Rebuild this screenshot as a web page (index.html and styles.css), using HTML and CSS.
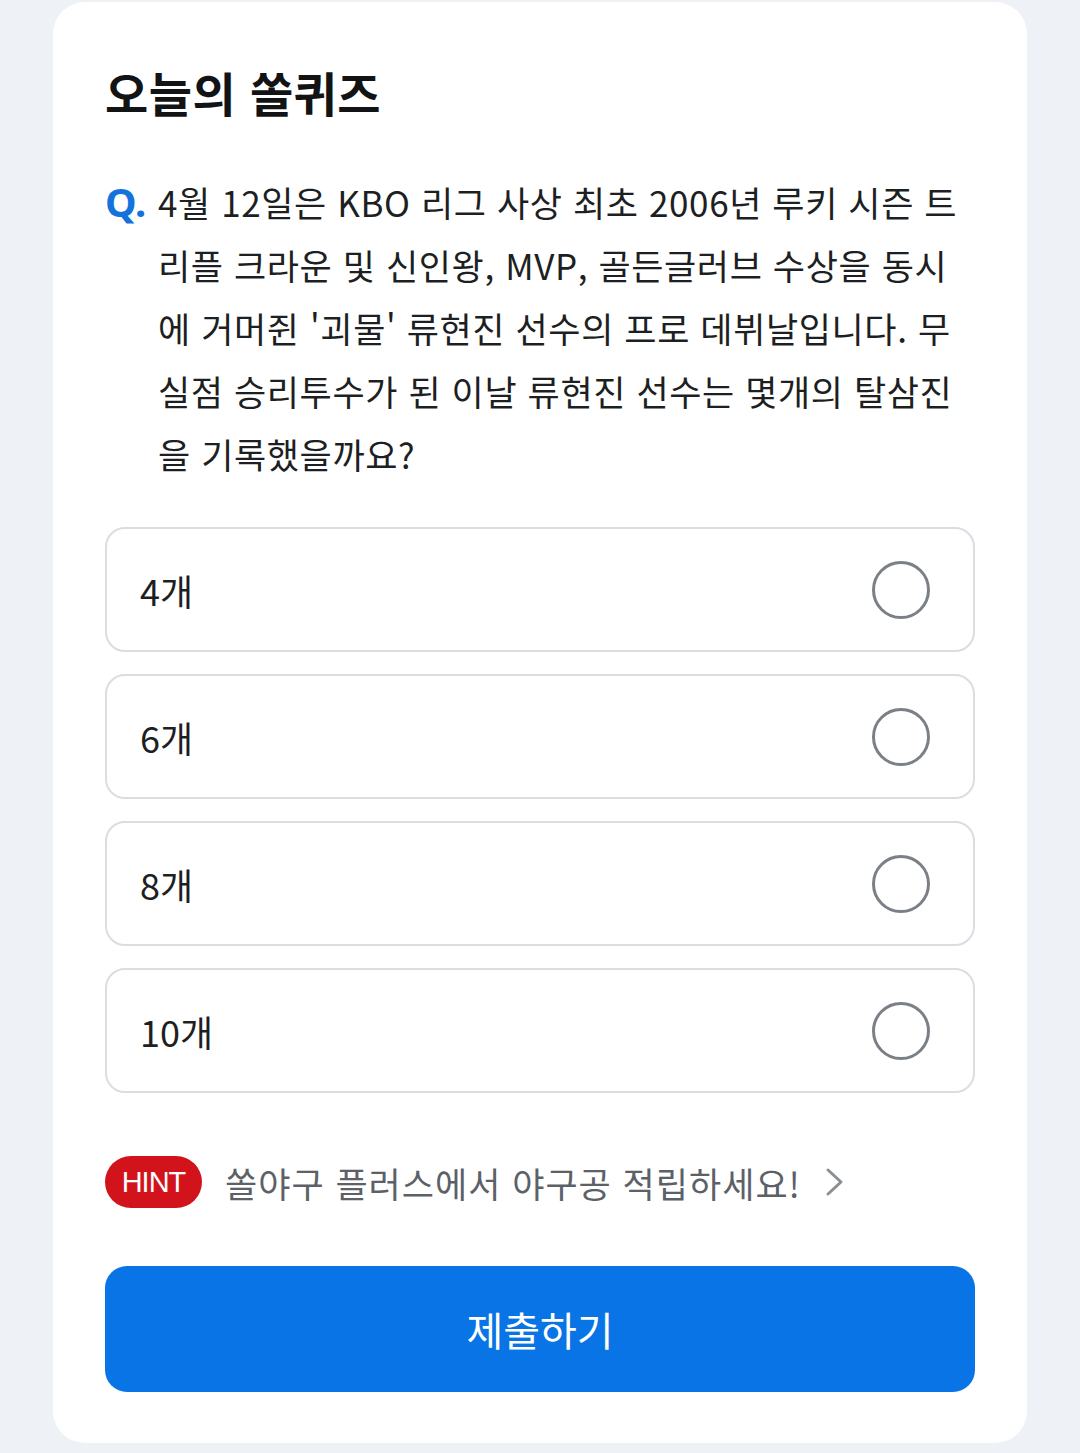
FILE: index.html
```html
<!DOCTYPE html>
<html lang="ko">
<head>
    <meta charset="UTF-8">
    <meta name="viewport" content="width=device-width, initial-scale=1.0">
    <title>오늘의 쏠퀴즈</title>
    <link rel="stylesheet" href="styles.css">
</head>
<body>
    <div class="quiz-card">
        <h1 class="quiz-title">오늘의 쏠퀴즈</h1>

        <div class="question">
            <span class="q-mark">Q.</span>
            <p class="q-text">4월 12일은 KBO 리그 사상 최초 2006년 루키 시즌 트리플 크라운 및 신인왕, MVP, 골든글러브 수상을 동시에 거머쥔 '괴물' 류현진 선수의 프로 데뷔날입니다. 무실점 승리투수가 된 이날 류현진 선수는 몇개의 탈삼진을 기록했을까요?</p>
        </div>

        <div class="options">
            <label class="option">
                <span class="option-text">4개</span>
                <span class="radio"></span>
            </label>
            <label class="option">
                <span class="option-text">6개</span>
                <span class="radio"></span>
            </label>
            <label class="option">
                <span class="option-text">8개</span>
                <span class="radio"></span>
            </label>
            <label class="option">
                <span class="option-text">10개</span>
                <span class="radio"></span>
            </label>
        </div>

        <a class="hint" href="#">
            <span class="hint-badge">HINT</span>
            <span class="hint-text">쏠야구 플러스에서 야구공 적립하세요!</span>
            <svg class="chevron" width="20" height="30" viewBox="0 0 20 30">
                <path d="M3 3 L16 15 L3 27" fill="none" stroke="#8a8f96" stroke-width="3" stroke-linecap="round" stroke-linejoin="round"/>
            </svg>
        </a>

        <button class="submit-btn">제출하기</button>
    </div>
</body>
</html>
```

FILE: styles.css
```css
* {
    box-sizing: border-box;
}

body {
    margin: 0;
    padding: 2px 0 10px;
    background-color: #eef1f6;
    font-family: "Noto Sans CJK KR", "Noto Sans", sans-serif;
    color: #1d1f22;
}

.quiz-card {
    width: 974px;
    margin: 0 auto;
    padding: 62px 52px 51px;
    background-color: #fff;
    border-radius: 32px;
}

.quiz-title {
    margin: 0;
    font-size: 47px;
    line-height: 56px;
    font-weight: 700;
    color: #111315;
    letter-spacing: 0.5px;
}

.question {
    display: flex;
    margin-top: 50px;
}

.q-mark {
    flex: 0 0 53px;
    font-family: "Noto Sans", sans-serif;
    font-size: 40px;
    line-height: 63px;
    font-weight: 700;
    color: #1572dc;
}

.q-text {
    margin: 0;
    flex: 1;
    font-size: 35px;
    line-height: 63px;
    letter-spacing: 0.6px;
    word-break: break-all;
    color: #1d1f22;
}

.options {
    display: flex;
    flex-direction: column;
    gap: 22px;
    margin-top: 42px;
}

.option {
    display: flex;
    align-items: center;
    justify-content: space-between;
    height: 125px;
    padding: 0 43px 0 33px;
    border: 2px solid #dadde2;
    border-radius: 20px;
    cursor: pointer;
}

.option-text {
    font-size: 36px;
    color: #1d1f22;
}

.radio {
    width: 58px;
    height: 58px;
    border: 3px solid #7b8087;
    border-radius: 50%;
}

.hint {
    display: flex;
    align-items: center;
    margin-top: 63px;
    text-decoration: none;
}

.hint-badge {
    display: inline-flex;
    align-items: center;
    justify-content: center;
    width: 97px;
    height: 52px;
    border-radius: 26px;
    background-color: #d3131b;
    color: #fff;
    font-family: "Liberation Sans", Arial, sans-serif;
    font-size: 29px;
    letter-spacing: -1px;
}

.hint-text {
    margin-left: 23px;
    font-size: 35px;
    letter-spacing: 1px;
    color: #5c6168;
}

.chevron {
    margin-left: 24px;
}

.submit-btn {
    display: block;
    width: 100%;
    height: 126px;
    margin-top: 58px;
    border: none;
    border-radius: 22px;
    background-color: #0874e6;
    color: #fff;
    font-family: "Noto Sans CJK KR", sans-serif;
    font-size: 40px;
    cursor: pointer;
}
```
